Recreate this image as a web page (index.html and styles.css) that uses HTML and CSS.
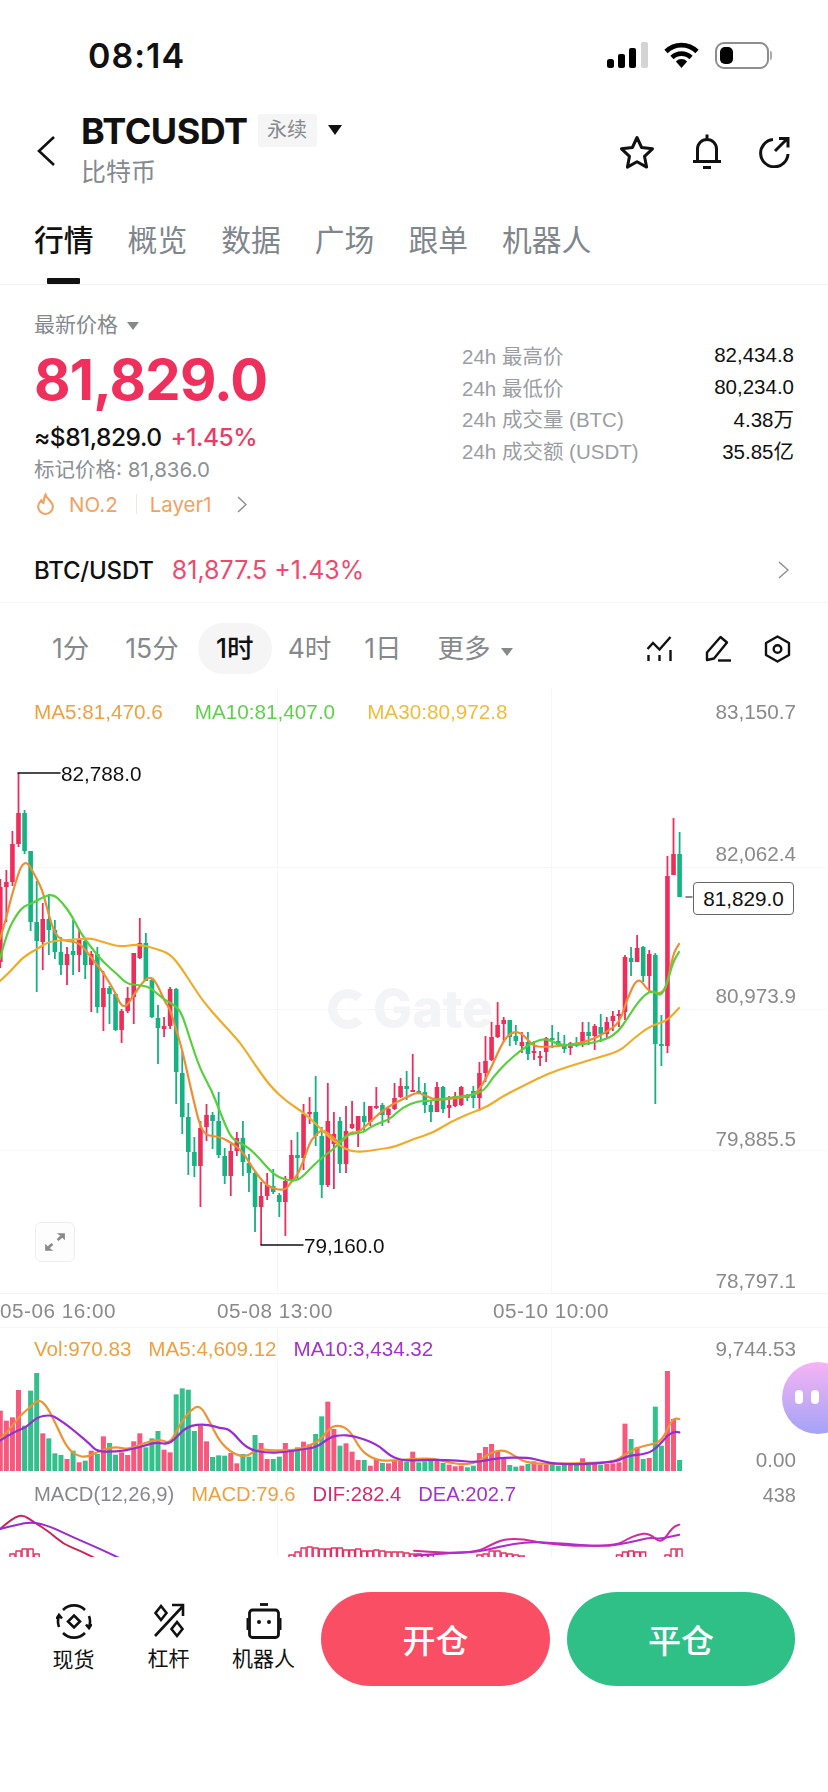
FILE: index.html
```html
<!DOCTYPE html>
<html lang="zh">
<head>
    <meta charset="utf-8">
    <meta name="viewport" content="width=device-width, initial-scale=1, shrink-to-fit=no">
    <title>BTCUSDT</title>
    <link rel="stylesheet" href="styles.css">
    <script src="chart.js" defer></script>
</head>
<body>
<main class="page">
    <header class="status-bar">
        <span class="clock">08:14</span>
        <div class="status-icons">
            <svg class="signal" width="41" height="26" viewBox="0 0 41 26">
                <rect x="0" y="17" width="7" height="9" rx="2.5" fill="#000"/>
                <rect x="11" y="12" width="7" height="14" rx="2" fill="#000"/>
                <rect x="22" y="6" width="7" height="20" rx="2" fill="#000"/>
                <rect x="34" y="0" width="7" height="26" rx="2" fill="#d4d4d4"/>
            </svg>
            <svg class="wifi" width="35" height="26" viewBox="0 0 35 26" fill="none" stroke="#000" stroke-width="4.6">
                <path d="M2 9.5a22 22 0 0 1 31 0"/>
                <path d="M8 15.5a13.6 13.6 0 0 1 19 0"/>
                <path d="M17.5 26l-5.6-6.6a8 8 0 0 1 11.2 0z" fill="#000" stroke="none"/>
            </svg>
            <div class="battery"><span class="battery-level"></span></div>
            <span class="battery-nub"></span>
        </div>
    </header>

    <section class="title-bar">
        <svg class="back" width="18" height="30" viewBox="0 0 18 30" fill="none" stroke="#111" stroke-width="2.6">
            <path d="M17 1L2 15l15 14"/>
        </svg>
        <div class="title">
            <div class="title-top">
                <h1>BTCUSDT</h1>
                <span class="tag">永续</span>
                <span class="caret caret-big"></span>
            </div>
            <div class="subtitle">比特币</div>
        </div>
        <div class="title-actions">
            <svg width="36" height="34" viewBox="0 0 36 34" fill="none" stroke="#111" stroke-width="3" stroke-linejoin="round">
                <path d="M18 2.500l4.600 10 10.900 1.300-8 7.500 2.100 10.800L18 26.800l-9.600 5.300 2.100-10.800-8-7.500 10.900-1.300z"/>
            </svg>
            <svg width="30" height="35" viewBox="0 0 30 35" fill="none" stroke="#111" stroke-width="3">
                <path d="M5.500 27V15a9.500 9.500 0 0 1 19 0v12"/>
                <path d="M1 27.500h28M15 .5v4M11 33.500h8"/>
            </svg>
            <svg width="33" height="32" viewBox="0 0 33 32" fill="none" stroke="#111" stroke-width="3">
                <path d="M15 3.500A13.700 13.700 0 1 0 30 18"/>
                <path d="M17 15L29 3M21 2.500h9v9"/>
            </svg>
        </div>
    </section>

    <nav class="tabs">
        <a class="tab active">行情</a>
        <a class="tab">概览</a>
        <a class="tab">数据</a>
        <a class="tab">广场</a>
        <a class="tab">跟单</a>
        <a class="tab">机器人</a>
    </nav>

    <section class="ticker">
        <div class="ticker-main">
            <div class="price-label">最新价格 <span class="caret caret-small"></span></div>
            <div class="last-price">81,829.0</div>
            <div class="fiat-line">≈$81,829.0 <span class="up">+1.45%</span></div>
            <div class="mark-price">标记价格: 81,836.0</div>
            <div class="rank-line">
                <svg width="19" height="22" viewBox="0 0 18 21" fill="none" stroke="#f2a260" stroke-width="2">
                    <path d="M9 1.500c.5 3.500 7 6.500 7 11.500a7 7 0 0 1-14 0c0-3 1.500-4.500 3-6 .5 1.500 1 2 2 2.500C7.500 6 8 3.500 9 1.500z"/>
                </svg>
                <span class="rank">NO.2</span>
                <span class="rank-sep"></span>
                <span>Layer1</span>
                <svg class="rank-more" width="10" height="17" viewBox="0 0 10 17" fill="none" stroke="#8c8f93" stroke-width="1.500">
                    <path d="M1 1l8 7.500L1 16"/>
                </svg>
            </div>
        </div>
        <dl class="stats">
            <dt>24h 最高价</dt><dd>82,434.8</dd>
            <dt>24h 最低价</dt><dd>80,234.0</dd>
            <dt>24h 成交量 (BTC)</dt><dd>4.38万</dd>
            <dt>24h 成交额 (USDT)</dt><dd>35.85亿</dd>
        </dl>
    </section>

    <section class="spot-row">
        <strong>BTC/USDT</strong>
        <span class="spot-price">81,877.5 +1.43%</span>
        <svg width="11" height="18" viewBox="0 0 11 18" fill="none" stroke="#8c8f93" stroke-width="1.500">
            <path d="M1 1l9 8-9 8"/>
        </svg>
    </section>

    <section class="periods">
        <a class="period period-1">1分</a>
        <a class="period period-2">15分</a>
        <a class="period period-3 active">1时</a>
        <a class="period period-4">4时</a>
        <a class="period period-5">1日</a>
        <a class="period period-6">更多 <span class="caret caret-small"></span></a>
        <div class="period-tools">
            <svg width="27" height="26" viewBox="0 0 27 26" fill="none" stroke="#111" stroke-width="2.400">
                <path d="M1.500 13l5.500-6 6.500 6.500L24.500 1"/>
                <path d="M2.500 19v6M13.500 19v6M24.500 14v11"/>
            </svg>
            <svg width="27" height="27" viewBox="0 0 27 27" fill="none" stroke="#111" stroke-width="2.400" stroke-linejoin="round">
                <path d="M2 17.500L15.500 2l6.500 5.500L9 23.500l-7 1.500z"/>
                <path d="M13 25.500h13"/>
            </svg>
            <svg width="27" height="28" viewBox="0 0 27 28" fill="none" stroke="#111" stroke-width="2.400" stroke-linejoin="round">
                <path d="M13.500 1.500l11.500 6.500v12l-11.500 6.500L2 20V8z"/>
                <circle cx="13.500" cy="14" r="3.800"/>
            </svg>
        </div>
    </section>

    <section class="chart">
        <div class="watermark">
            <span class="watermark-logo"></span>Gate
        </div>
        <canvas id="kline" width="828" height="870"></canvas>

        <div class="legend legend-kline">
            <span class="c-ma5">MA5:81,470.6</span>
            <span class="c-ma10">MA10:81,407.0</span>
            <span class="c-ma30">MA30:80,972.8</span>
        </div>
        <div class="price-axis">
            <span>83,150.7</span>
            <span>82,062.4</span>
            <span>80,973.9</span>
            <span>79,885.5</span>
            <span>78,797.1</span>
        </div>
        <span class="extreme extreme-high">82,788.0</span>
        <span class="extreme extreme-low">79,160.0</span>
        <span class="current-price">81,829.0</span>

        <button class="expand">
            <svg width="22" height="20" viewBox="0 0 20 18" fill="#8a8a8a">
                <path d="M11.500 1H19v6.500l-2.400-2.300-3.400 3-1.700-1.800 3.300-3zM8.500 17H1v-6.500l2.400 2.300 3.400-3 1.700 1.800-3.300 3z"/>
            </svg>
        </button>

        <div class="time-axis">
            <span>05-06 16:00</span>
            <span>05-08 13:00</span>
            <span>05-10 10:00</span>
        </div>

        <div class="legend legend-vol">
            <span class="c-ma5">Vol:970.83</span>
            <span class="c-ma5">MA5:4,609.12</span>
            <span class="c-purple">MA10:3,434.32</span>
        </div>
        <span class="side-value side-vol-max">9,744.53</span>
        <span class="side-value side-vol-min">0.00</span>

        <div class="legend legend-macd">
            <span class="c-gray">MACD(12,26,9)</span>
            <span class="c-ma5">MACD:79.6</span>
            <span class="c-dif">DIF:282.4</span>
            <span class="c-purple">DEA:202.7</span>
        </div>
        <span class="side-value side-macd">438</span>

        <div class="assistant"><i></i><i></i></div>
    </section>

    <footer class="actions">
        <a class="tool">
            <svg width="36" height="37" viewBox="0 0 36 37" fill="none" stroke="#111" stroke-width="2.600">
                <path d="M7 7a15.500 15.500 0 0 1 22 0M29 30a15.500 15.500 0 0 1-22 0"/>
                <path d="M3 13a15.500 15.500 0 0 0 0 11M33 24a15.500 15.500 0 0 0 0-11"/>
                <path d="M.5 16L3 12l3 3.500M35.500 21L33 25l-3-3.500"/>
                <path d="M18 12.500l6 6-6 6-6-6z"/>
            </svg>
            <span>现货</span>
        </a>
        <a class="tool">
            <svg width="32" height="36" viewBox="0 0 32 36" fill="none" stroke="#111" stroke-width="2.600">
                <path d="M2 33L30 3M19 2h11v11"/>
                <path d="M8 3l5.500 7L8 17 2.500 10zM24 19l5.500 7L24 33l-5.500-7z"/>
            </svg>
            <span>杠杆</span>
        </a>
        <a class="tool">
            <svg width="36" height="36" viewBox="0 0 36 36" fill="none" stroke="#111" stroke-width="2.800">
                <path d="M14 1.500h8"/>
                <rect x="3.500" y="7" width="29" height="27.500" rx="3"/>
                <path d="M1.500 15v12M34.500 15v12" stroke-width="2"/>
                <circle cx="13" cy="19" r="2" fill="#111" stroke="none"/>
                <circle cx="23" cy="19" r="2" fill="#111" stroke="none"/>
            </svg>
            <span>机器人</span>
        </a>
        <button class="trade trade-open">开仓</button>
        <button class="trade trade-close">平仓</button>
    </footer>
</main>
</body>
</html>
```

FILE: styles.css
```css
html, body {
    margin: 0;
    height: 100%;
    background: #fff;
}
body {
    font-family: Inter, "Noto Sans CJK SC", sans-serif;
    color: #111;
}
svg {
    display: block;
    flex: none;
}
.page {
    position: relative;
    width: 828px;
    height: 1792px;
    overflow: hidden;
}

/* status bar */
.status-bar {
    height: 110px;
    display: flex;
    align-items: center;
    padding: 0 0 0 88px;
    box-sizing: border-box;
}
.clock {
    font-size: 34px;
    font-weight: 600;
    letter-spacing: 1px;
}
.status-icons {
    margin-left: auto;
    display: flex;
    align-items: center;
    margin-right: 56px;
}
.wifi {
    margin-left: 16px;
}
.battery {
    margin-left: 16px;
    width: 54px;
    height: 27px;
    box-sizing: border-box;
    border: 2px solid #8d8d8d;
    border-radius: 9px;
    padding: 3px;
}
.battery-level {
    display: block;
    width: 13px;
    height: 17px;
    background: #000;
    border-radius: 5px;
}
.battery-nub {
    width: 2px;
    height: 9px;
    background: #aaa;
    margin-left: 1px;
    border-radius: 0 2px 2px 0;
}

/* title */
.title-bar {
    height: 84px;
    display: flex;
    align-items: flex-start;
    padding-left: 37px;
    box-sizing: border-box;
}
.back {
    margin-top: 26px;
}
.title {
    margin: 1px 0 0 26px;
}
.title-top {
    display: flex;
    align-items: center;
    height: 40px;
}
h1 {
    margin: 0;
    font-size: 36px;
    font-weight: 700;
    letter-spacing: -0.5px;
}
.tag {
    margin: -2px 0 0 10px;
    width: 59px;
    height: 33px;
    line-height: 33px;
    text-align: center;
    font-size: 20px;
    color: #85898e;
    background: #f5f5f5;
    border-radius: 3px;
}
.caret {
    display: inline-block;
    border-style: solid;
    border-color: currentColor transparent transparent;
}
.caret-big {
    margin-left: 11px;
    margin-top: -3px;
    border-width: 10px 7px 0;
    color: #111;
}
.caret-small {
    margin-left: 3px;
    border-width: 8px 6px 0;
    color: #85898e;
    vertical-align: 2px;
}
.subtitle {
    margin-top: 5px;
    font-size: 25px;
    line-height: 32px;
    color: #85898e;
}
.title-actions {
    margin-left: auto;
    margin-right: 37px;
    margin-top: 24px;
    display: flex;
    align-items: center;
    gap: 36px;
}
.title-actions svg:first-child {
    margin-right: 1px;
}

/* tabs */
.tabs {
    height: 91px;
    box-sizing: border-box;
    display: flex;
    gap: 34px;
    padding: 26px 0 0 34px;
    border-bottom: 1px solid #f0f0f0;
}
.tab {
    position: relative;
    font-size: 29.800px;
    line-height: 40px;
    color: #7f868c;
}
.tab.active {
    color: #111;
    font-weight: 500;
}
.tab.active::after {
    content: "";
    position: absolute;
    left: 13px;
    top: 58px;
    width: 33px;
    height: 6px;
    background: #111;
    border-radius: 1px;
}

/* ticker */
.ticker {
    display: flex;
    justify-content: space-between;
    padding: 28px 34px 23px;
}
.price-label {
    font-size: 21px;
    line-height: 24px;
    color: #85898e;
}
.last-price {
    margin-top: 10px;
    font-size: 56.200px;
    line-height: 66px;
    font-weight: 700;
    letter-spacing: -0.8px;
    color: #ef2f5c;
}
.fiat-line {
    margin-top: 9px;
    font-size: 24.500px;
    line-height: 30px;
    font-weight: 500;
    letter-spacing: -0.5px;
}
.up {
    color: #ee3a66;
    margin-left: 3px;
}
.mark-price {
    margin-top: 5px;
    font-size: 20.500px;
    line-height: 26px;
    color: #8b9095;
}
.rank-line {
    margin-top: 8px;
    height: 26px;
    display: flex;
    align-items: center;
    font-size: 20.500px;
    color: #f2a260;
    padding-left: 2px;
}
.rank {
    margin-left: 14px;
}
.rank-sep {
    width: 1px;
    height: 20px;
    margin: 0 13px 0 18px;
    background: #f1e8df;
}
.rank-more {
    margin-left: 25px;
}
.stats {
    margin: 26px 0 0;
    width: 332px;
    display: grid;
    grid-template-columns: 1fr auto;
    grid-auto-rows: 31.800px;
    align-items: center;
    font-family: "Liberation Sans", "Noto Sans CJK SC", sans-serif;
    font-size: 20.500px;
}
.stats dt {
    color: #9a9ea3;
}
.stats dd {
    margin: 0;
    text-align: right;
    color: #111;
}

/* spot row */
.spot-row {
    height: 63px;
    box-sizing: border-box;
    display: flex;
    align-items: center;
    padding: 0 39px 2px 34px;
    border-bottom: 1px solid #f7f7f7;
}
.spot-row strong {
    font-size: 24px;
    font-weight: 500;
    letter-spacing: -0.2px;
}
.spot-price {
    margin-left: 18px;
    font-size: 25px;
    color: #ee4a70;
    margin-right: auto;
}

/* periods */
.periods {
    height: 86px;
    box-sizing: border-box;
    padding: 20px 0 15px;
    display: flex;
    align-items: center;
}
.period {
    font-size: 26.500px;
    line-height: 53px;
    color: #85898e;
    text-align: center;
}
.period-1 { margin-left: 52px; }
.period-2 { margin-left: 36px; }
.period.active {
    margin-left: 19px;
    width: 74px;
    height: 51px;
    line-height: 51px;
    background: #f5f5f5;
    border-radius: 25px;
    color: #111;
    font-weight: 500;
}
.period-4 { margin-left: 16px; }
.period-5 { margin-left: 33px; }
.period-6 { margin-left: 36px; }
.period-tools {
    margin-left: auto;
    margin-right: 37px;
    display: flex;
    gap: 32px;
    align-items: center;
}

/* chart */
.chart {
    position: relative;
    height: 870px;
    font-family: "Liberation Sans", sans-serif;
    font-size: 20.700px;
}
#kline {
    position: absolute;
    inset: 0;
}
.watermark {
    position: absolute;
    left: 328px;
    top: 294px;
    display: flex;
    align-items: center;
    gap: 5px;
    font-family: Inter, sans-serif;
    font-size: 52px;
    line-height: 52px;
    font-weight: 800;
    color: #f3f4f6;
}
.watermark-logo {
    width: 22px;
    height: 22px;
    border: 9px solid #f3f4f6;
    border-right-color: transparent;
    border-radius: 50%;
}
.legend {
    position: absolute;
    left: 34px;
    display: flex;
    line-height: 24px;
    white-space: nowrap;
}
.legend-kline { top: 11px; gap: 32px; }
.legend-vol { top: 648px; gap: 17px; font-size: 20.600px; }
.legend-macd { top: 793px; gap: 17px; font-size: 20.200px; }
.c-ma5 { color: #f0a040; }
.c-ma10 { color: #5fd24c; }
.c-ma30 { color: #f2bb3c; }
.c-purple { color: #a233cc; }
.c-dif { color: #d42a6e; }
.c-gray { color: #85898e; }

.price-axis {
    position: absolute;
    right: 32px;
    top: 11px;
    display: flex;
    flex-direction: column;
    align-items: flex-end;
    gap: 118.200px;
    line-height: 24px;
    color: #8a8a8a;
}
.extreme {
    position: absolute;
    line-height: 24px;
    color: #111;
}
.extreme-high { left: 61px; top: 73px; }
.extreme-low { left: 304px; top: 545px; }
.current-price {
    position: absolute;
    left: 693px;
    top: 193px;
    width: 101px;
    height: 33px;
    box-sizing: border-box;
    border: 1px solid #666;
    border-radius: 4px;
    background: #fff;
    text-align: center;
    line-height: 31px;
    color: #111;
}
.expand {
    position: absolute;
    left: 35px;
    top: 533px;
    width: 40px;
    height: 40px;
    box-sizing: border-box;
    padding: 0;
    display: flex;
    align-items: center;
    justify-content: center;
    background: #fdfdfd;
    border: 1px solid #eee;
    border-radius: 6px;
}
.time-axis {
    position: absolute;
    top: 610px;
    left: 0;
    display: grid;
    grid-template-columns: 217px 276px auto;
    line-height: 24px;
    letter-spacing: 0.5px;
    color: #8a8a8a;
}
.side-value {
    position: absolute;
    right: 32px;
    line-height: 24px;
    color: #8a8a8a;
}
.side-vol-max { top: 648px; }
.side-vol-min { top: 759px; }
.side-macd { top: 794px; font-size: 20px; }
.assistant {
    position: absolute;
    left: 782px;
    top: 673px;
    width: 72px;
    height: 72px;
    border-radius: 50%;
    background: linear-gradient(#f6b4f4, #a3a3f6);
    display: flex;
    gap: 8px;
    padding: 28px 0 0 13px;
    box-sizing: border-box;
}
.assistant i {
    width: 8px;
    height: 14px;
    background: #fff;
    border-radius: 4px;
}

/* bottom actions */
.actions {
    display: flex;
    align-items: flex-start;
    padding: 33px 0 0 26px;
}
.tool {
    width: 95px;
    padding-top: 11px;
    display: flex;
    flex-direction: column;
    align-items: center;
    font-size: 21px;
    line-height: 28px;
}
.tool span {
    margin-top: 6px;
}
.trade {
    width: 229px;
    height: 94px;
    border: 0;
    border-radius: 50px / 47px;
    color: #fff;
    font-family: inherit;
    font-size: 33px;
    font-weight: 500;
}
.trade-open {
    margin-left: 10px;
    background: #f94e64;
}
.trade-close {
    width: 228px;
    margin-left: 17px;
    background: #2fc088;
}
```

FILE: chart.js
```js
// kline, volume and macd panes, all values are in page pixels
var canvas = document.getElementById('kline');
var ctx = canvas.getContext('2d');
ctx.translate(0, -690);

var RED = '#ee2e5a', GREEN = '#14b381';
var BAR_RED = '#f9587c', BAR_GREEN = '#33c08d';
var STEP = 6.065;

function xAt(i) {
    return 0.3 + STEP * i;
}

// c, high, body top, body bottom, low
var candles = [
    ['r',880,888,963,969],['r',871,883,888,923],['r',832,845,883,887],['r',774,814,845,848],
    ['g',811,814,852,855],['g',852,852,923,932],['g',882,923,942,993],['r',904,920,943,971],
    ['g',895,920,931,956],['g',921,931,953,960],['g',938,953,966,976],['r',948,955,966,986],
    ['g',921,952,956,976],['r',931,940,956,973],['g',940,942,966,980],['r',952,955,966,1013],
    ['g',948,955,1008,1014],['r',972,989,1008,1032],['g',987,989,995,1025],['g',994,995,1031,1032],
    ['r',1010,1012,1031,1044],['r',988,999,1012,1014],['r',954,954,998,1025],['r',919,944,959,960],
    ['g',934,944,982,982],['g',980,981,1018,1019],['g',1006,1019,1029,1065],['r',1018,1027,1030,1038],
    ['r',988,990,1027,1030],['g',989,990,1073,1105],['g',1052,1074,1118,1135],['g',1104,1118,1153,1176],
    ['g',1138,1153,1167,1178],['r',1122,1129,1167,1208],['r',1105,1116,1128,1142],['g',1113,1116,1122,1150],
    ['g',1093,1122,1156,1159],['g',1149,1157,1177,1185],['r',1145,1152,1177,1197],['r',1133,1139,1152,1157],
    ['g',1122,1139,1163,1177],['g',1155,1164,1174,1193],['g',1172,1174,1208,1233],['r',1183,1197,1208,1246],
    ['r',1174,1186,1197,1201],['g',1170,1187,1193,1195],['g',1194,1196,1203,1218],['r',1177,1182,1203,1237],
    ['r',1141,1156,1182,1182],['g',1133,1156,1159,1180],['r',1105,1115,1159,1171],['r',1098,1113,1115,1125],
    ['g',1077,1113,1137,1147],['g',1128,1137,1186,1199],['r',1084,1122,1186,1188],['r',1113,1135,1145,1190],
    ['g',1118,1122,1165,1174],['r',1107,1132,1165,1174],['r',1102,1125,1129,1130],['r',1117,1117,1132,1148],
    ['g',1103,1117,1123,1133],['r',1107,1107,1123,1127],['r',1088,1107,1109,1110],['g',1104,1106,1116,1127],
    ['r',1109,1110,1116,1124],['r',1084,1099,1110,1111],['r',1079,1087,1098,1099],['g',1072,1087,1090,1101],
    ['r',1055,1091,1093,1093],['g',1078,1092,1094,1095],['g',1084,1093,1106,1114],['g',1102,1106,1113,1123],
    ['r',1083,1088,1113,1113],['g',1087,1088,1110,1114],['r',1097,1106,1109,1119],['r',1093,1097,1107,1108],
    ['r',1087,1088,1106,1107],['g',1095,1097,1098,1102],['g',1087,1092,1099,1109],['r',1063,1074,1099,1112],
    ['r',1037,1062,1074,1083],['r',1023,1038,1061,1062],['r',1003,1026,1038,1039],['r',1018,1021,1025,1043],
    ['g',1021,1021,1038,1047],['g',1026,1037,1042,1046],['r',1033,1043,1047,1054],['g',1033,1043,1055,1061],
    ['r',1042,1052,1053,1061],['r',1052,1057,1059,1067],['r',1038,1039,1053,1063],['g',1026,1039,1041,1049],
    ['g',1033,1042,1046,1048],['g',1036,1045,1050,1054],['r',1043,1044,1049,1056],['g',1038,1045,1047,1048],
    ['r',1023,1033,1046,1048],['g',1023,1033,1037,1046],['r',1025,1027,1037,1051],['g',1015,1028,1035,1043],
    ['r',1018,1023,1035,1039],['r',1012,1017,1022,1032],['r',1011,1015,1017,1028],['r',956,958,1013,1021],
    ['g',948,959,963,977],['r',936,949,963,963],['g',947,948,977,983],['r',951,955,977,993],
    ['g',954,956,1045,1105],['g',1016,1045,1047,1067],['r',857,877,1047,1054],['r',819,855,876,876],
    ['g',833,855,898,898]
];

var ma5 = [0,940,6,920,12,895,24,857,37,880,43,893,49,917,55,935,63,942,79,943,90,957,103,973,115,993,
    121,1007,127,1007,133,997,145,980,152,978,158,987,165,1003,170,1010,176,1030,182,1050,188,1077,194,1103,
    200,1127,206,1136,213,1137,223,1139,233,1145,243,1153,253,1170,267,1188,285,1192,291,1183,297,1177,
    303,1163,310,1143,315,1137,322,1130,333,1138,340,1145,350,1133,358,1134,370,1123,382,1112,393,1105,
    407,1098,418,1093,428,1098,437,1101,450,1100,473,1097,482,1087,492,1067,503,1042,513,1032,523,1035,
    533,1047,543,1048,560,1047,587,1043,607,1033,620,1023,627,1000,638,977,648,992,655,993,661,995,667,987,673,955,679,945];
var ma10 = [0,960,7,933,17,915,24,907,33,904,43,898,53,895,62,903,72,917,80,933,90,947,103,963,117,975,
    127,985,138,986,150,988,163,1000,176,1007,182,1015,190,1040,200,1070,212,1092,220,1113,230,1137,237,1143,
    248,1148,260,1160,273,1175,285,1181,298,1182,310,1170,318,1162,327,1155,337,1147,347,1135,363,1134,
    370,1128,382,1123,390,1120,403,1108,418,1102,430,1102,453,1098,482,1095,493,1078,507,1063,520,1052,
    533,1043,547,1039,560,1047,587,1045,607,1040,618,1033,627,1020,638,1003,648,993,655,993,661,997,667,985,673,963,679,953];
var ma30 = [0,982,10,973,23,958,37,950,50,942,70,941,90,939,103,943,120,948,138,945,157,950,170,955,180,967,
    193,987,203,1002,220,1022,240,1043,253,1063,270,1087,287,1103,303,1113,316,1125,328,1137,340,1147,350,1152,
    363,1153,380,1150,395,1148,413,1140,433,1134,450,1123,473,1113,487,1108,503,1097,527,1085,547,1075,570,1067,
    600,1058,620,1052,633,1040,650,1027,667,1022,679,1009];

// top of each volume bar, read at 3x from y = 1300
var volTops = [335,365,355,273,380,275,222,403,418,463,468,480,455,490,485,455,465,412,432,467,460,468,427,403,
    445,418,396,452,460,286,268,272,396,380,427,474,469,470,462,493,465,473,408,432,480,480,473,432,450,445,428,
    436,405,352,308,390,440,433,458,483,483,500,480,492,493,484,484,488,458,490,487,484,482,492,497,502,500,505,
    500,462,444,435,455,475,498,503,500,495,487,497,497,495,500,498,497,497,478,497,492,497,495,493,490,374,420,
    445,480,477,323,440,216,360,483];

var volMa5 = [0,420,30,390,60,350,90,325,115,300,140,320,170,380,200,445,230,470,260,475,290,460,340,442,390,452,
    430,432,480,420,510,435,540,375,570,335,600,317,630,370,660,430,700,465,740,475,770,450,830,455,900,452,960,425,
    990,385,1020,378,1050,395,1080,450,1110,475,1150,487,1242,480,1302,478,1342,490,1392,497,1432,490,1472,460,1512,452,
    1542,470,1582,493,1662,495,1712,493,1842,490,1872,468,1912,445,1952,437,1987,425,2017,358,2038,360];
var volMa10 = [0,425,40,400,80,385,110,355,150,347,175,360,210,385,240,410,270,435,290,458,350,458,400,450,440,438,
    470,430,510,437,560,380,620,375,660,388,690,390,740,450,800,462,850,460,900,452,950,445,990,415,1020,408,1060,410,
    1130,435,1170,470,1200,483,1242,485,1302,482,1372,485,1432,490,1492,477,1582,475,1622,485,1672,497,1842,492,1882,470,
    1942,465,1972,445,2002,410,2022,398,2038,400];

var dif = [0,690,40,655,70,648,100,668,150,700,190,735,240,755,290,780];
var dea = [0,690,50,678,95,668,150,682,220,715,300,750,360,778];
var dif2 = [1242,755,1292,758,1342,762,1432,758,1472,738,1512,720,1572,720,1622,732,1742,742,1852,738,1882,720,
    1912,707,1947,702,1984,735,2017,685,2038,677];
var dea2 = [1242,770,1342,762,1432,760,1502,742,1582,728,1662,732,1802,742,1852,738,1912,725,1952,715,1982,720,2038,707];

// macd histogram: candle index, top of the bar
var macdBars = [[2,1555],[3,1552],[4,1550],[5,1550],[6,1555],[48,1556],[49,1553],[50,1549],[51,1548],[52,1549],
    [53,1550],[54,1550],[55,1549],[56,1549],[57,1551],[58,1551],[59,1550],[60,1552],[61,1552],[62,1551],[63,1552],
    [64,1553],[65,1553],[66,1553],[67,1554],[68,1555],[69,1555],[70,1556],[71,1556],[79,1556],[80,1555],[81,1552],
    [82,1552],[83,1554],[84,1555],[85,1556],[86,1557],[102,1556],[103,1553],[104,1552],[105,1553],[106,1553],
    [110,1556],[111,1550],[112,1550]];

function grid() {
    ctx.strokeStyle = '#f6f6f6';
    ctx.lineWidth = 1;
    ctx.beginPath();
    [868, 1010, 1151].forEach(function (y) {
        ctx.moveTo(0, y + 0.5);
        ctx.lineTo(828, y + 0.5);
    });
    [277, 551].forEach(function (x) {
        ctx.moveTo(x + 0.5, 690);
        ctx.lineTo(x + 0.5, 1294);
        ctx.moveTo(x + 0.5, 1328);
        ctx.lineTo(x + 0.5, 1558);
    });
    ctx.moveTo(0, 1328.5);
    ctx.lineTo(828, 1328.5);
    ctx.moveTo(0, 1294.5);
    ctx.lineTo(828, 1294.5);
    ctx.stroke();
}

function drawCandles() {
    candles.forEach(function (c, i) {
        var x = xAt(i);
        ctx.fillStyle = c[0] === 'r' ? RED : GREEN;
        ctx.fillRect(x - 0.9, c[1], 1.8, c[4] - c[1]);
        ctx.fillRect(x - 2.3, c[2], 4.6, Math.max(c[3] - c[2], 2));
    });
}

// smooth line through the midpoints of the points
function line(points, color, width) {
    ctx.strokeStyle = color;
    ctx.lineWidth = width;
    ctx.lineJoin = 'round';
    ctx.lineCap = 'round';
    ctx.beginPath();
    ctx.moveTo(points[0], points[1]);
    for (var i = 2; i < points.length - 2; i += 2) {
        var mx = (points[i] + points[i + 2]) / 2;
        var my = (points[i + 1] + points[i + 3]) / 2;
        ctx.quadraticCurveTo(points[i], points[i + 1], mx, my);
    }
    ctx.lineTo(points[points.length - 2], points[points.length - 1]);
    ctx.stroke();
}

// the volume and macd curves were read at 3x from y = 1300
function scaled(points) {
    return points.map(function (v, i) {
        return i % 2 === 0 ? v / 3 : 1300 + v / 3;
    });
}

function drawVolume() {
    volTops.forEach(function (top, i) {
        var y = 1300 + top / 3;
        var red = candles[i][0] === 'r';
        ctx.fillStyle = red ? BAR_RED : BAR_GREEN;
        ctx.fillRect(xAt(i) - 2.5, y, 5, 1472 - y);
    });
    line(scaled(volMa5), '#ee9232', 2.2);
    line(scaled(volMa10), '#9a2bd2', 2.2);
}

function drawMacd() {
    ctx.save();
    ctx.beginPath();
    ctx.rect(0, 1500, 828, 58);
    ctx.clip();

    // only the tops of the bars are above the cut
    ctx.strokeStyle = '#e8305f';
    ctx.lineWidth = 1.4;
    macdBars.forEach(function (b) {
        ctx.strokeRect(xAt(b[0]) - 2.5, b[1], 5, 20);
    });
    line(scaled(dif), '#cc2456', 2);
    line(scaled(dea), '#9a2bd2', 2);
    line(scaled(dif2), '#d32a9c', 2);
    line(scaled(dea2), '#b02ccf', 2);
    ctx.restore();
}

function extremes() {
    ctx.strokeStyle = '#111';
    ctx.lineWidth = 1.5;
    ctx.beginPath();
    ctx.moveTo(18, 774);
    ctx.lineTo(60, 774);
    ctx.moveTo(261, 1246);
    ctx.lineTo(303, 1246);
    ctx.stroke();
    ctx.strokeStyle = '#666';
    ctx.beginPath();
    ctx.moveTo(686, 898);
    ctx.lineTo(692, 898);
    ctx.stroke();
}

grid();
drawCandles();
line(ma5, '#ee8e34', 2.2);
line(ma10, '#58cf3c', 2.2);
line(ma30, '#f0ac28', 2.2);
extremes();
drawVolume();
drawMacd();
```
